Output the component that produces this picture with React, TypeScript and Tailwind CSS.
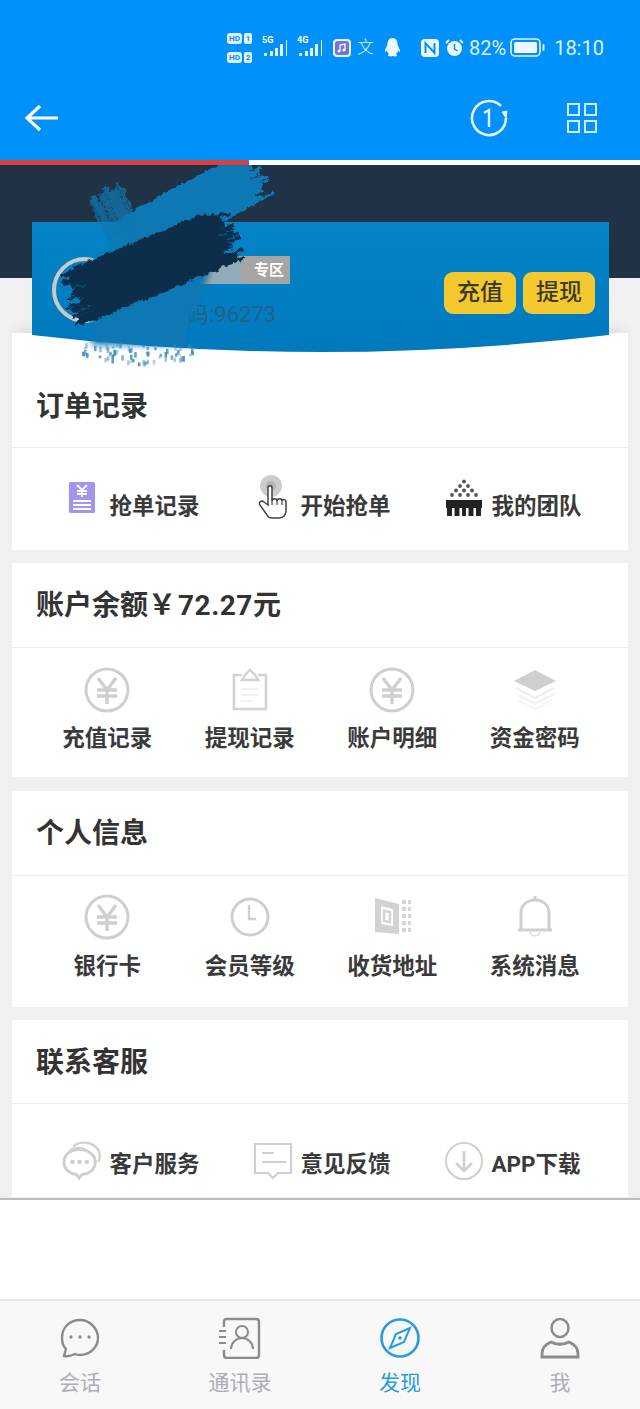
import React from "react";

const FONT = "font-['Roboto','Noto_Sans_CJK_SC',sans-serif]";

const Yuan = () => (
  <svg width="46" height="46" viewBox="0 0 46 46" fill="none" stroke="#cfcfcf">
    <circle cx="23" cy="23" r="21" strokeWidth="3" />
    <path d="M14 11l9 12 9-12M23 23v14M13 23h20M13 29h20" strokeWidth="3.4" />
  </svg>
);
const Clip = () => (
  <svg width="46" height="46" viewBox="0 0 46 46" fill="none" stroke="#d2d2d2">
    <path d="M15 8H7v34h32V8h-8" strokeWidth="2.6" />
    <path d="M15 13l3-5 5-5 5 5 3 5z" strokeWidth="2.4" />
    <path d="M14 22h18M14 28h18M14 34h12" strokeWidth="1.2" stroke="#e6e6e6" />
  </svg>
);
const Layers = () => (
  <svg width="46" height="46" viewBox="0 0 46 46" fill="none">
    <path d="M23 3L44 14 23 24 2 14z" fill="#cfcfcf" />
    <path d="M4 21l19 10 19-10" stroke="#efefef" strokeWidth="2" />
    <path d="M4 27l19 10 19-10" stroke="#f2f2f2" strokeWidth="2" />
    <path d="M6 33l17 9 17-9" stroke="#f5f5f5" strokeWidth="2" />
  </svg>
);
const Clock = () => (
  <svg width="46" height="46" viewBox="0 0 46 46" fill="none" stroke="#cfcfcf">
    <circle cx="23" cy="23" r="18" strokeWidth="3" />
    <path d="M22 11v14h7" strokeWidth="2.4" />
  </svg>
);
const Door = () => (
  <svg width="46" height="46" viewBox="0 0 46 46" fill="none">
    <path d="M6 4l24 6v30L6 38z" fill="#d2d2d2" />
    <path d="M12 12l12 3v17l-12-2z" fill="#fff" />
    <path d="M15 17l6 1v10l-6-1z" stroke="#d2d2d2" strokeWidth="2.4" />
    <path d="M33 8h9M33 15h9M33 22h9M33 29h9M33 36h9" stroke="#d6d6d6" strokeWidth="4" strokeDasharray="4 2" />
  </svg>
);
const Bell = () => (
  <svg width="46" height="46" viewBox="0 0 46 46" fill="none" stroke="#d0d0d0">
    <path d="M23 2v4" strokeWidth="3" />
    <path d="M6 36h34M9 36V19C9 11 15 6 23 6s14 5 14 13v17" strokeWidth="3" />
    <path d="M18 38c1 5 9 5 10 0" strokeWidth="1.6" stroke="#e0e0e0" />
  </svg>
);
const OrderIcon = () => (
  <svg width="28" height="32" viewBox="0 0 28 32">
    <rect x="1" y="0" width="26" height="31" rx="1.5" fill="#a394f0" />
    <path d="M9 3l5 5 5-5M14 8v7M9 9h10M9 12h10" stroke="#fff" strokeWidth="1.8" fill="none" />
    <path d="M5 19h18M5 23h18M5 27h18" stroke="#fff" strokeWidth="1.8" />
  </svg>
);
const HandIcon = () => (
  <svg width="40" height="46" viewBox="0 0 40 46" fill="none">
    <circle cx="18" cy="11" r="11" fill="#cccccc" />
    <circle cx="18" cy="11" r="5" fill="#b4b4b4" />
    <path
      d="M15 13v17l-4-3c-2-2-6 0-4 3l7 10c1 2 3 3 5 3h7c4 0 7-3 7-7v-9c0-3-4-3-4-1 0-3-5-3-5 0 0-3-5-3-5 0v-13c0-3-4-3-4 0z"
      stroke="#444"
      strokeWidth="1.500"
      fill="#fff"
    />
    <path d="M19 24v6M24 24v6M29 25v5" stroke="#444" strokeWidth="1.200" />
  </svg>
);
const TeamIcon = () => (
  <svg width="36" height="38" viewBox="0 0 36 38">
    <g fill="#555">
      <circle cx="18" cy="2.5" r="1.9" />
      <circle cx="14" cy="7" r="1.9" />
      <circle cx="22" cy="7" r="1.9" />
      <circle cx="10" cy="11.5" r="1.9" />
      <circle cx="18" cy="11.5" r="1.9" />
      <circle cx="26" cy="11.5" r="1.9" />
      <circle cx="6" cy="16" r="1.9" />
      <circle cx="14" cy="16" r="1.9" />
      <circle cx="22" cy="16" r="1.9" />
      <circle cx="30" cy="16" r="1.9" />
    </g>
    <g fill="#222">
      <path d="M0 21h36v8H0z" />
      <path d="M1 27h5v10H1zM8.500 27h5v10h-5zM16 27h4v10h-4zM22.500 27h5v10h-5zM30 27h5v10h-5z" />
    </g>
  </svg>
);
const ChatIcon = () => (
  <svg width="42" height="42" viewBox="0 0 42 42" fill="none" stroke="#cfcfcf">
    <path d="M12 6c4-5 15-6 22-1 6 4 7 12 4 17" strokeWidth="2.4" />
    <path d="M8 10c4-3 12-4 18 0" strokeWidth="2.4" />
    <path d="M18 9C8 9 2 15 2 22c0 8 7 13 13 13l3 4 3-4c8 0 14-6 14-13S28 9 18 9z" strokeWidth="3" fill="#fff" />
    <g fill="#cfcfcf" stroke="none">
      <circle cx="11" cy="22" r="2.400" />
      <circle cx="18.500" cy="22" r="2.400" />
      <circle cx="26" cy="22" r="2.400" />
    </g>
  </svg>
);
const FeedbackIcon = () => (
  <svg width="40" height="38" viewBox="0 0 40 38" fill="none" stroke="#cfcfcf">
    <path d="M2 2h36v29H25l-5 5-5-5H2z" strokeWidth="2.2" />
    <path d="M9 11h12M9 20h24" strokeWidth="2.2" />
  </svg>
);
const DownIcon = () => (
  <svg width="40" height="40" viewBox="0 0 40 40" fill="none" stroke="#cfcfcf">
    <circle cx="20" cy="20" r="18" strokeWidth="2" />
    <path d="M20 10v20M12 22l8 8 8-8" strokeWidth="2.6" />
  </svg>
);

const Signal = () => (
  <svg className="absolute right-0 bottom-0" width="29" height="20" viewBox="0 0 29 20" fill="#e4f3ff">
    <path d="M2 14h3v3H2zM8 12h3v5H8zM13 9h3v8h-3zM18 5h3v12h-3zM24 1h1v16h-1z" />
  </svg>
);

const Wide = ({ icon, label, shift }: { icon: React.ReactNode; label: string; shift: string }) => (
  <div className="flex items-center justify-center gap-[8px]">
    <div className={`flex w-[40px] justify-center ${shift}`}>{icon}</div>
    <span className="w-[90px] whitespace-nowrap text-[22.500px] leading-[30px] font-bold text-[#3a3a3a]">{label}</span>
  </div>
);

const Tile = ({ icon, label, gap }: { icon: React.ReactNode; label: string; gap: string }) => (
  <div className={`flex flex-col items-center ${gap}`}>
    <div className="flex h-[46px] items-center justify-center">{icon}</div>
    <span className="whitespace-nowrap text-[22.500px] leading-[30px] font-bold text-[#3a3a3a]">{label}</span>
  </div>
);

const Title = ({ children, cls }: { children: React.ReactNode; cls: string }) => (
  <div className={`flex items-center border-b border-[#ececec] pl-[24px] text-[28px] font-bold text-[#333] ${cls}`}>{children}</div>
);

/* deterministic jitter for the brush bristles */
const jit = (i: number, k: number) => {
  const v = Math.sin(i * 12.9898 + k * 78.233) * 43758.5453;
  return v - Math.floor(v);
};

const bristles = (x1: number, y1: number, x2: number, y2: number, width: number, n: number, spread: number) => {
  const dx = x2 - x1;
  const dy = y2 - y1;
  const len = Math.hypot(dx, dy);
  const nx = -dy / len;
  const ny = dx / len;
  return Array.from({ length: n }, (_, i) => {
    const o = (i / (n - 1) - 0.5) * width;
    const a = -jit(i, 1) * spread;
    const b = jit(i, 2) * spread;
    return {
      x1: x1 + nx * o + (dx / len) * a,
      y1: y1 + ny * o + (dy / len) * a,
      x2: x2 + nx * o + (dx / len) * b,
      y2: y2 + ny * o + (dy / len) * b,
      w: 1.5 + jit(i, 3) * 2,
    };
  });
};

const Scribble = () => {
  const light = bristles(135, 240, 245, 180, 50, 26, 22);
  const tuft = bristles(108, 198, 132, 250, 34, 14, 14);
  const dark = bristles(88, 292, 215, 240, 54, 30, 26);
  const specks = Array.from({ length: 70 }, (_, i) => ({
    x: 82 + jit(i, 4) * 112,
    y: 343 + jit(i, 5) * (20 - Math.abs(jit(i, 4) - 0.5) * 14),
    h: 2 + jit(i, 6) * 4,
    o: 0.35 + jit(i, 7) * 0.55,
  }));
  return (
    <svg className="absolute top-[165px] left-0 z-20" width="300" height="210" viewBox="0 165 300 210" fill="none">
      <defs>
        <filter id="rough" x="-30%" y="-30%" width="160%" height="160%">
          <feTurbulence type="fractalNoise" baseFrequency="0.16" numOctaves="2" seed="4" result="n" />
          <feDisplacementMap in="SourceGraphic" in2="n" scale="7" xChannelSelector="R" yChannelSelector="G" />
          <feGaussianBlur stdDeviation="0.6" />
        </filter>
        <filter id="soft" x="-30%" y="-30%" width="160%" height="160%">
          <feGaussianBlur stdDeviation="3" />
        </filter>
      </defs>
      <path d="M92 258L180 222 214 258 200 300 188 322 186 345 92 345z" fill="#0a78b4" filter="url(#soft)" />
      <path d="M213 256h28v28h-28z" fill="#7fb2cf" opacity="0.5" />
      <g filter="url(#rough)">
        {light.map((l, i) => (
          <line key={i} x1={l.x1} y1={l.y1} x2={l.x2} y2={l.y2} stroke="#0b79b5" strokeWidth={l.w + 1} />
        ))}
        {tuft.map((l, i) => (
          <line key={i} x1={l.x1} y1={l.y1} x2={l.x2} y2={l.y2} stroke="#0f78b0" strokeWidth={l.w} opacity="0.75" />
        ))}
      </g>
      <g>
        {specks.map((s, i) => (
          <rect key={i} x={s.x} y={s.y} width="2.500" height={s.h} fill="#3b89b6" opacity={s.o} />
        ))}
      </g>
      <g filter="url(#rough)">
        <path d="M88 292L215 240" stroke="#102f4b" strokeWidth="40" />
        {dark.map((l, i) => (
          <line key={i} x1={l.x1} y1={l.y1} x2={l.x2} y2={l.y2} stroke="#102f4b" strokeWidth={l.w + 1} />
        ))}
      </g>
    </svg>
  );
};

export default function App() {
  return (
    <div className={`relative flex h-[1409px] w-[640px] flex-col overflow-hidden bg-white ${FONT}`}>
      {/* status bar */}
      <div className="flex h-[94px] items-center bg-[#0091fa] pt-[1px] pr-[34px] pl-[227px] text-white">
        <div className="flex w-[30px] flex-col gap-[8px] text-[8px] leading-[11px] font-bold">
          <div className="flex gap-[2px]">
            <span className="rounded-[3px] bg-[#e4f3ff] px-[2px] text-[#0091fa]">HD</span>
            <span className="rounded-[2px] bg-[#e4f3ff] px-[2px] text-[#0091fa]">1</span>
          </div>
          <div className="flex gap-[2px]">
            <span className="rounded-[3px] bg-[#e4f3ff] px-[2px] text-[#0091fa]">HD</span>
            <span className="rounded-[2px] bg-[#e4f3ff] px-[2px] text-[#0091fa]">2</span>
          </div>
        </div>
        <div className="relative ml-[5px] h-[22px] w-[29px]">
          <span className="absolute top-[-2px] left-0 text-[9px] leading-[10px] font-bold">5G</span>
          <Signal />
        </div>
        <div className="relative ml-[6px] h-[22px] w-[29px]">
          <span className="absolute top-[-2px] left-0 text-[9px] leading-[10px] font-bold">4G</span>
          <Signal />
        </div>
        <svg className="ml-[7px]" width="18" height="18" viewBox="0 0 18 18">
          <rect width="18" height="18" rx="4" fill="#e9f0ff" />
          <rect x="2" y="2" width="14" height="14" rx="3" fill="#6f74d8" />
          <path d="M7 12V6l5-1v6" stroke="#fff" strokeWidth="1.300" fill="none" />
          <circle cx="6" cy="12" r="1.500" fill="#fff" />
          <circle cx="11" cy="11" r="1.500" fill="#fff" />
        </svg>
        <span className="ml-[6px] w-[19px] text-[17px] leading-none font-light text-[#dff1ff]">文</span>
        <svg className="ml-[8px]" width="17" height="19" viewBox="0 0 17 19" fill="#eef8ff">
          <path d="M8.500 0C5 0 3.500 3 3.500 6c0 2-3 5-2.500 8 1 0 1.500-1 2-2 0 2 1 3 2 4-3 2 1 3 3.500 2 2.500 1 6.500 0 3.500-2 1-1 2-2 2-4 .5 1 1 2 2 2 .5-3-2.500-6-2.500-8 0-3-1.500-6-5-6z" />
        </svg>
        <svg className="ml-[20px]" width="18" height="18" viewBox="0 0 18 18">
          <rect width="18" height="18" rx="4" fill="#eef8ff" />
          <path d="M4.500 14V4l9 10V4" stroke="#0091fa" strokeWidth="2" fill="none" />
        </svg>
        <svg className="ml-[6px]" width="19" height="19" viewBox="0 0 19 19" fill="none">
          <circle cx="9.500" cy="10.500" r="7.500" fill="#eef8ff" />
          <path d="M9.500 6v5l3 2" stroke="#0091fa" strokeWidth="1.500" />
          <path d="M1 5l3-3M18 5l-3-3" stroke="#eef8ff" strokeWidth="2" />
        </svg>
        <span className="ml-[5px] text-[20px] leading-none text-[#dff1ff]">82%</span>
        <svg className="ml-[4px]" width="35" height="19" viewBox="0 0 35 19" fill="none">
          <rect x="1" y="1" width="29" height="17" rx="4" stroke="#dff1ff" strokeWidth="1.600" />
          <rect x="4" y="4" width="23" height="11" rx="1.500" fill="#eef6ff" />
          <rect x="32.500" y="6" width="2" height="7" rx="1" fill="#dff1ff" />
        </svg>
        <span className="ml-[9px] text-[20px] leading-none text-[#dff1ff]">18:10</span>
      </div>

      {/* nav bar */}
      <div className="flex h-[66px] items-start justify-between bg-[#0091fa] pr-[43px] pl-[24px] text-white">
        <svg className="mt-[9px]" width="36" height="30" viewBox="0 0 36 30" fill="none" stroke="#fff" strokeWidth="3.200">
          <path d="M34 15H4M16 3L3 15l13 12" />
        </svg>
        <div className="mt-[5px] flex items-center gap-[59px]">
          <svg width="38" height="38" viewBox="0 0 38 38" fill="none" stroke="#e8f5ff" strokeWidth="2.600">
            <path d="M36 19a17 17 0 1 1-5-12" />
            <path d="M32 13l4 6 1-7z" fill="#e8f5ff" strokeWidth="1" />
            <path d="M14 14l5-3v17" strokeWidth="2.400" />
          </svg>
          <svg width="30" height="30" viewBox="0 0 30 30" fill="none" stroke="#d6eeff" strokeWidth="2">
            <rect x="1" y="1" width="11" height="11" />
            <rect x="18" y="1" width="11" height="11" />
            <rect x="1" y="18" width="11" height="11" />
            <rect x="18" y="18" width="11" height="11" />
          </svg>
        </div>
      </div>

      {/* progress bar */}
      <div className="flex h-[5px] bg-white">
        <div className="h-full w-[249px] bg-[#d8413f]" />
      </div>

      {/* page content */}
      <div className="flex h-[1035px] flex-col border-b-[2px] border-[#bdbdbd] bg-[#f0f0f0]">
        <div className="h-[113px] shrink-0 bg-[#203245]" />
        <div className="relative z-10 mr-[31px] ml-[32px] -mt-[56px] flex h-[130px] shrink-0 items-start justify-between bg-gradient-to-b from-[#0584c8] to-[#0079bd] pt-[50px] pr-[14px] [clip-path:path('M0_0H577V113Q288_147_0_113Z')]">
          <div className="relative h-full flex-1">
            <div className="absolute top-[-15px] left-[20px] h-[66px] w-[66px] rounded-full border-[4px] border-[#c9c9c9]" />
            <div className="absolute top-[-16px] left-[143px] flex h-[28px] w-[115px] items-center justify-end bg-[#a5a5a5] pr-[6px] text-[15px] font-bold text-white">专区</div>
            <div className="absolute top-[29px] left-[155px] text-[22px] leading-[28px] whitespace-nowrap text-[#265f88]">码:96273</div>
          </div>
          <div className="flex gap-[7px]">
            <div className="flex h-[42px] w-[72px] items-center justify-center rounded-[9px] bg-[#f4c92f] text-[23px] font-medium text-[#3b3a22]">充值</div>
            <div className="flex h-[42px] w-[72px] items-center justify-center rounded-[9px] bg-[#f4c92f] text-[23px] font-medium text-[#3b3a22]">提现</div>
          </div>
        </div>

        <div className="mx-[12px] -mt-[19px] flex shrink-0 flex-col">
          <div className="bg-white shadow-[0_-8px_10px_-4px_rgba(0,0,0,0.08)]">
            <Title cls="h-[115px] pt-[33px]">订单记录</Title>
            <div className="grid h-[102px] grid-cols-3 items-center pt-[14px] pr-[20px] pl-[23px]">
              <Wide shift="-translate-y-[8px]" icon={<OrderIcon />} label="抢单记录" />
              <Wide shift="-translate-y-[8px]" icon={<HandIcon />} label="开始抢单" />
              <Wide shift="-translate-y-[8px]" icon={<TeamIcon />} label="我的团队" />
            </div>
          </div>

          <div className="mt-[13px] bg-white">
            <Title cls="h-[85px] pt-[1px]">
              账户余额￥<span className="ml-[2px] tracking-[0.5px]">72.27</span>元
            </Title>
            <div className="grid h-[129px] grid-cols-4 pt-[19px] pr-[22px] pl-[24px]">
              <Tile gap="gap-[10px]" icon={<Yuan />} label="充值记录" />
              <Tile gap="gap-[10px]" icon={<Clip />} label="提现记录" />
              <Tile gap="gap-[10px]" icon={<Yuan />} label="账户明细" />
              <Tile gap="gap-[10px]" icon={<Layers />} label="资金密码" />
            </div>
          </div>

          <div className="mt-[14px] bg-white">
            <Title cls="h-[85px] pt-[2px]">个人信息</Title>
            <div className="grid h-[131px] grid-cols-4 pt-[18px] pr-[22px] pl-[24px]">
              <Tile gap="gap-[11px]" icon={<Yuan />} label="银行卡" />
              <Tile gap="gap-[11px]" icon={<Clock />} label="会员等级" />
              <Tile gap="gap-[11px]" icon={<Door />} label="收货地址" />
              <Tile gap="gap-[11px]" icon={<Bell />} label="系统消息" />
            </div>
          </div>

          <div className="mt-[13px] bg-white">
            <Title cls="h-[84px] pt-[2px]">联系客服</Title>
            <div className="grid h-[93px] grid-cols-3 items-center pt-[26px] pr-[20px] pl-[23px]">
              <Wide shift="-translate-y-[3px]" icon={<ChatIcon />} label="客户服务" />
              <Wide shift="-translate-y-[3px]" icon={<FeedbackIcon />} label="意见反馈" />
              <Wide shift="-translate-y-[3px]" icon={<DownIcon />} label="APP下载" />
            </div>
          </div>
        </div>
      </div>

      <div className="flex-1 bg-white" />

      {/* tab bar */}
      <nav className="grid h-[110px] shrink-0 grid-cols-4 border-t-[2px] border-[#e6e6e6] bg-[#f8f8f8] pt-[16px]">
        <div className="flex flex-col items-center gap-[9px]">
          <svg width="42" height="42" viewBox="0 0 42 42" fill="none" stroke="#8b8b8b" strokeWidth="2.400">
            <path d="M21 3C10 3 3 11 3 21c0 5 2 9 4 11l-2 7c5 1 9-1 11-2 2 1 3 1 5 1 10 0 18-8 18-17S31 3 21 3z" />
            <circle cx="12" cy="20" r="1.700" fill="#8b8b8b" stroke="none" />
            <circle cx="21" cy="20" r="1.700" fill="#8b8b8b" stroke="none" />
            <circle cx="30" cy="20" r="1.700" fill="#8b8b8b" stroke="none" />
          </svg>
          <span className="text-[21px] leading-[30px] text-[#adadb8]">会话</span>
        </div>
        <div className="flex flex-col items-center gap-[9px]">
          <svg width="42" height="42" viewBox="0 0 42 42" fill="none" stroke="#8b8b8b" strokeWidth="2.400">
            <path d="M5 10V5c0-2 1-3 3-3h29c2 0 3 1 3 3v33c0 2-1 3-3 3H8c-2 0-3-1-3-3v-5" />
            <path d="M0 14h7M0 20h7M0 26h7" strokeWidth="2" />
            <circle cx="23" cy="15" r="6" strokeWidth="2" />
            <path d="M12 32c0-6 5-11 11-11s11 5 11 11" strokeWidth="2" />
          </svg>
          <span className="text-[21px] leading-[30px] text-[#adadb8]">通讯录</span>
        </div>
        <div className="flex flex-col items-center gap-[9px]">
          <svg width="42" height="42" viewBox="0 0 42 42" fill="none" stroke="#2a9ae0" strokeWidth="2.600">
            <circle cx="21" cy="21" r="18.500" />
            <path d="M31 11l-14 6-6 14 14-6z" strokeWidth="2" />
            <circle cx="21" cy="21" r="1.800" fill="#2a9ae0" stroke="none" />
          </svg>
          <span className="text-[21px] leading-[30px] text-[#2a9ae0]">发现</span>
        </div>
        <div className="flex flex-col items-center gap-[9px]">
          <svg width="42" height="42" viewBox="0 0 42 42" fill="none" stroke="#8b8b8b" strokeWidth="2.400">
            <ellipse cx="21" cy="11" rx="8.500" ry="9" />
            <path d="M12 25c-5 2-9 6-9 12v3h36v-3c0-6-4-10-9-12-5 3-13 3-18 0z" strokeWidth="2.800" />
          </svg>
          <span className="text-[21px] leading-[30px] text-[#adadb8]">我</span>
        </div>
      </nav>

      <Scribble />
    </div>
  );
}
